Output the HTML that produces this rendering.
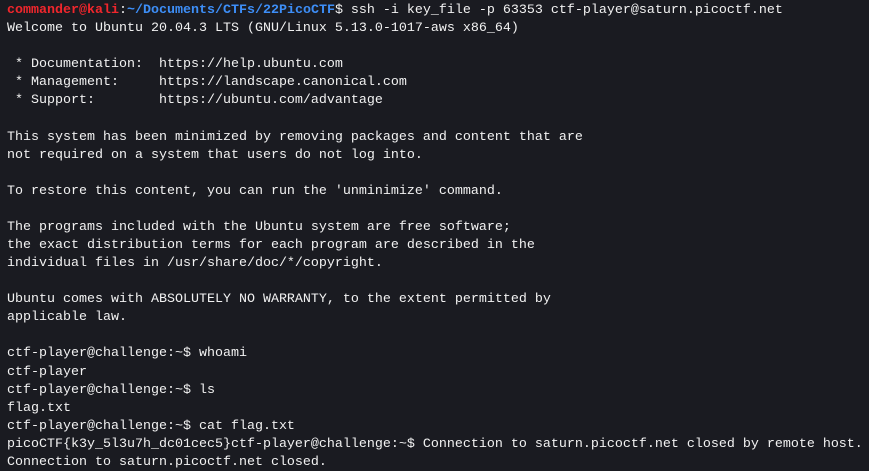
<!DOCTYPE html>
<html><head><style>
html,body{margin:0;padding:0;background:#1a1b21;width:869px;height:471px;overflow:hidden}
pre{margin:0;padding:2px 0 0 7px;font-family:"Liberation Mono","DejaVu Sans Mono",monospace;font-size:13.34px;line-height:18.08px;color:#f2f2f2;white-space:pre}
.r{color:#f0262c;font-weight:bold}.b{color:#3d8ef7;font-weight:bold}
</style></head><body><pre><span class="r">commander@kali</span>:<span class="b">~/Documents/CTFs/22PicoCTF</span>$ ssh -i key_file -p 63353 ctf-player@saturn.picoctf.net
Welcome to Ubuntu 20.04.3 LTS (GNU/Linux 5.13.0-1017-aws x86_64)

 * Documentation:  https://help.ubuntu.com
 * Management:     https://landscape.canonical.com
 * Support:        https://ubuntu.com/advantage

This system has been minimized by removing packages and content that are
not required on a system that users do not log into.

To restore this content, you can run the 'unminimize' command.

The programs included with the Ubuntu system are free software;
the exact distribution terms for each program are described in the
individual files in /usr/share/doc/*/copyright.

Ubuntu comes with ABSOLUTELY NO WARRANTY, to the extent permitted by
applicable law.

ctf-player@challenge:~$ whoami
ctf-player
ctf-player@challenge:~$ ls
flag.txt
ctf-player@challenge:~$ cat flag.txt
picoCTF{k3y_5l3u7h_dc01cec5}ctf-player@challenge:~$ Connection to saturn.picoctf.net closed by remote host.
Connection to saturn.picoctf.net closed.</pre></body></html>
